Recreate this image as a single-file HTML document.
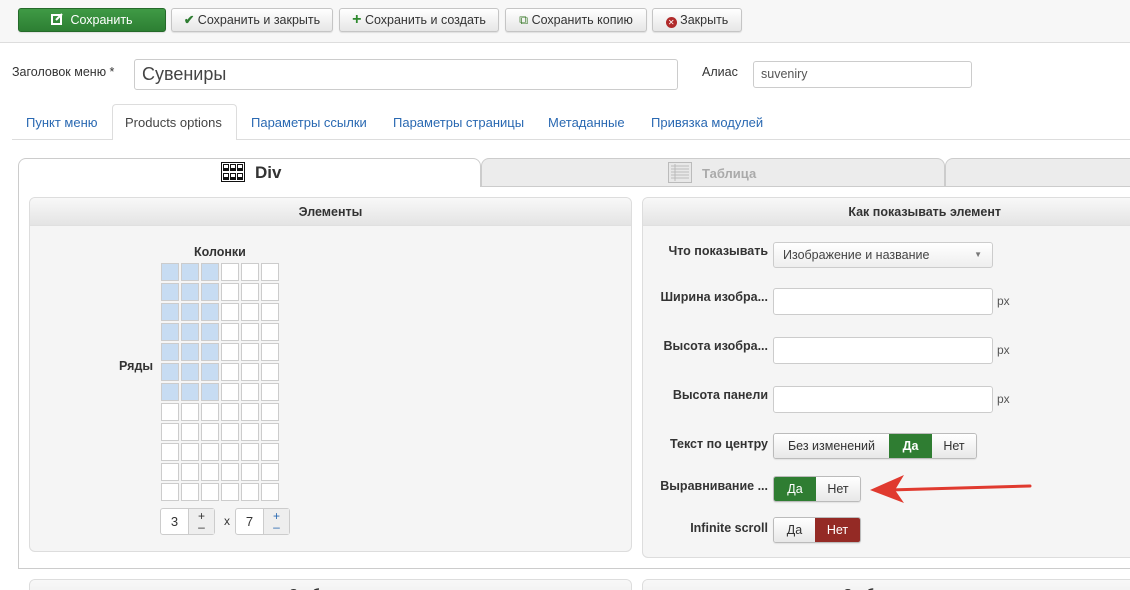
<!DOCTYPE html>
<html style="width:1130px;height:590px;overflow:hidden"><head><meta charset="utf-8"><style>
*{box-sizing:border-box;margin:0;padding:0}
body{width:1130px;height:590px;overflow:hidden;background:#fff;font-family:"Liberation Sans",Arial,sans-serif;font-size:13px;color:#333;position:relative}
.a{position:absolute}
.btn{position:absolute;top:8px;height:24px;border:1px solid #c5c5c5;border-radius:3px;background:linear-gradient(#fff,#e6e6e6);font-size:12.5px;line-height:22px;text-align:center;color:#333;box-shadow:0 1px 1px rgba(0,0,0,.1)}
.inp{position:absolute;background:#fff;border:1px solid #ccc;border-radius:3px}
.tab{position:absolute;top:115px;font-size:13px;color:#2a69b2}
.panel{position:absolute;background:#f5f5f5;border:1px solid #ddd;border-radius:6px;overflow:hidden}
.ph{height:28px;background:linear-gradient(#f8f8f8,#e4e4e4);border-bottom:1px solid #e0e0e0;text-align:center;font-weight:bold;font-size:12.5px;line-height:28px;color:#333}
.cell{position:absolute;width:18px;height:18px;border:1px solid #ccc;background:#fff}
.cell.s{background:#c7dcf2}
.lbl{position:absolute;right:362px;font-weight:bold;font-size:12.5px;color:#333;text-align:right}
.tg{position:absolute;height:26px;border:1px solid #bbb;border-radius:3px;overflow:hidden;display:flex;box-shadow:0 1px 1px rgba(0,0,0,.08)}
.tg span{display:block;height:24px;line-height:24px;text-align:center;background:linear-gradient(#fff,#e8e8e8);font-size:12.5px;color:#333}
.tg .g{background:#2f7d32;color:#fff}
.tg .r{background:#942a25;color:#fff}
.px{position:absolute;left:997px;font-size:12px;color:#555}
</style></head><body>
<div class="a" style="left:0;top:0;width:1130px;height:43px;background:#f7f7f7;border-bottom:1px solid #ddd"></div>
<div class="btn" style="left:18px;width:148px;background:linear-gradient(#3f9a45,#2d7f33);border-color:#256a2a;color:#fff"><svg width="12" height="12" style="vertical-align:-1px;margin-right:7px"><rect x="1" y="2" width="9" height="9" fill="none" stroke="#fff" stroke-width="2"/><path d="M5 7 L11 1" stroke="#fff" stroke-width="2"/></svg>Сохранить</div>
<div class="btn" style="left:171px;width:162px"><span style="color:#2f7d32;font-weight:bold">✔</span> Сохранить и закрыть</div>
<div class="btn" style="left:339px;width:160px"><span style="color:#2f8a2f;font-weight:bold;font-size:16px">+</span> Сохранить и создать</div>
<div class="btn" style="left:505px;width:142px"><span style="color:#3a7a2a">⧉</span> Сохранить копию</div>
<div class="btn" style="left:652px;width:90px"><span style="display:inline-block;width:11px;height:11px;border-radius:50%;background:#b02a2a;color:#fff;font-size:8px;line-height:11px;vertical-align:-1px">✕</span> Закрыть</div>

<div class="a" style="left:12px;top:65px;font-size:12.5px">Заголовок меню *</div>
<div class="inp" style="left:134px;top:59px;width:544px;height:31px;font-size:18px;line-height:29px;padding-left:7px;color:#444">Сувениры</div>
<div class="a" style="left:702px;top:65px;font-size:12.5px">Алиас</div>
<div class="inp" style="left:753px;top:61px;width:219px;height:27px;font-size:12.5px;line-height:25px;padding-left:7px;color:#555">suveniry</div>

<div class="a" style="left:12px;top:139px;width:1118px;height:1px;background:#ddd"></div>
<div class="a" style="left:112px;top:104px;width:125px;height:36px;background:#fff;border:1px solid #ddd;border-bottom:none;border-radius:4px 4px 0 0"></div>
<div class="tab" style="left:26px">Пункт меню</div>
<div class="tab" style="left:125px;color:#444">Products options</div>
<div class="tab" style="left:251px">Параметры ссылки</div>
<div class="tab" style="left:393px">Параметры страницы</div>
<div class="tab" style="left:548px">Метаданные</div>
<div class="tab" style="left:651px">Привязка модулей</div>

<div class="a" style="left:18px;top:186px;width:1112px;height:383px;border-left:1px solid #ccc;border-bottom:1px solid #ccc"></div>
<div class="a" style="left:18px;top:158px;width:463px;height:29px;background:#fff;border:1px solid #ccc;border-bottom:none;border-radius:8px 8px 0 0"></div>
<div class="a" style="left:481px;top:158px;width:464px;height:28px;background:#ececec;border:1px solid #ccc;border-bottom:none;border-radius:8px 8px 0 0"></div>
<div class="a" style="left:945px;top:158px;width:200px;height:28px;background:#ececec;border:1px solid #ccc;border-bottom:none;border-radius:8px 8px 0 0"></div>
<div class="a" style="left:481px;top:186px;width:649px;height:1px;background:#ccc"></div>
<svg class="a" style="left:221px;top:162px" width="24" height="20" viewBox="0 0 24 20"><rect x="0.5" y="0.5" width="23" height="19" fill="#fff" stroke="#111"/><g fill="#111"><rect x="2" y="2" width="6" height="7"/><rect x="9" y="2" width="6" height="7"/><rect x="16" y="2" width="6" height="7"/><rect x="2" y="11" width="6" height="7"/><rect x="9" y="11" width="6" height="7"/><rect x="16" y="11" width="6" height="7"/></g><g fill="#fff"><rect x="3" y="3" width="4" height="3"/><rect x="10" y="3" width="4" height="3"/><rect x="17" y="3" width="4" height="3"/><rect x="3" y="12" width="4" height="3"/><rect x="10" y="12" width="4" height="3"/><rect x="17" y="12" width="4" height="3"/></g></svg>
<div class="a" style="left:255px;top:163px;font-size:17px;font-weight:bold;color:#333">Div</div>
<svg class="a" style="left:668px;top:162px" width="24" height="21"><rect x="0.5" y="0.5" width="23" height="20" fill="#e8e8e8" stroke="#bbb"/><g stroke="#bbb"><line x1="3" y1="4" x2="21" y2="4"/><line x1="3" y1="7" x2="21" y2="7"/><line x1="3" y1="10" x2="21" y2="10"/><line x1="3" y1="13" x2="21" y2="13"/><line x1="3" y1="16" x2="21" y2="16"/><line x1="7" y1="2" x2="7" y2="19"/></g></svg>
<div class="a" style="left:702px;top:166px;font-size:13px;font-weight:bold;color:#aaa">Таблица</div>

<div class="panel" style="left:29px;top:197px;width:603px;height:355px"><div class="ph">Элементы</div></div>
<div class="a" style="left:194px;top:245px;font-weight:bold;font-size:12.5px">Колонки</div>
<div class="a" style="left:119px;top:359px;font-weight:bold;font-size:12.5px">Ряды</div>
<div id="grid"></div>
<div class="a" style="left:160px;top:508px;width:55px;height:27px;border:1px solid #ccc;border-radius:3px;background:#fff;display:flex"><span style="width:27px;text-align:center;line-height:25px">3</span><span style="flex:1;background:#eee;border-left:1px solid #ccc;text-align:center;font-size:12px;line-height:11px;padding-top:2px">+<br>–</span></div>
<div class="a" style="left:224px;top:514px;font-size:12px">x</div>
<div class="a" style="left:235px;top:508px;width:55px;height:27px;border:1px solid #ccc;border-radius:3px;background:#fff;display:flex"><span style="width:27px;text-align:center;line-height:25px">7</span><span style="flex:1;background:#eee;border-left:1px solid #ccc;text-align:center;font-size:12px;line-height:11px;padding-top:2px;color:#2a69b2">+<br>–</span></div>

<div class="panel" style="left:642px;top:197px;width:500px;height:361px"><div class="ph" style="padding-right:140px;padding-left:0;text-align:right">Как показывать элемент</div></div>
<div class="lbl" style="top:244px">Что показывать</div>
<div class="inp" style="left:773px;top:242px;width:220px;height:26px;background:linear-gradient(#fff,#eee);font-size:12.5px;line-height:24px;padding-left:9px;color:#444">Изображение и название<span style="position:absolute;right:10px;top:0;font-size:8px;color:#777">▼</span></div>
<div class="lbl" style="top:290px">Ширина изобра...</div>
<div class="inp" style="left:773px;top:288px;width:220px;height:27px"></div><div class="px" style="top:294px">px</div>
<div class="lbl" style="top:339px">Высота изобра...</div>
<div class="inp" style="left:773px;top:337px;width:220px;height:27px"></div><div class="px" style="top:343px">px</div>
<div class="lbl" style="top:388px">Высота панели</div>
<div class="inp" style="left:773px;top:386px;width:220px;height:27px"></div><div class="px" style="top:392px">px</div>
<div class="lbl" style="top:437px">Текст по центру</div>
<div class="tg" style="left:773px;top:433px;width:204px"><span style="width:115px">Без изменений</span><span class="g" style="width:43px;font-weight:bold">Да</span><span style="flex:1">Нет</span></div>
<div class="lbl" style="top:479px">Выравнивание ...</div>
<div class="tg" style="left:773px;top:476px;width:88px"><span class="g" style="width:42px">Да</span><span style="flex:1">Нет</span></div>
<div class="lbl" style="top:521px">Infinite scroll</div>
<div class="tg" style="left:773px;top:517px;width:88px"><span style="width:41px">Да</span><span class="r" style="flex:1">Нет</span></div>

<svg class="a" style="left:860px;top:470px" width="180" height="40"><line x1="170" y1="16" x2="28" y2="20" stroke="#e03a2f" stroke-width="3" stroke-linecap="round"/><polygon points="10,20 44,5 35,20 44,33" fill="#e03a2f"/></svg>

<div class="panel" style="left:29px;top:579px;width:603px;height:40px"><div class="ph" style="background:linear-gradient(#f8f8f8,#ececec)">Отображение</div></div>
<div class="panel" style="left:642px;top:579px;width:500px;height:40px"><div class="ph" style="background:linear-gradient(#f8f8f8,#ececec);text-align:left;padding-left:200px">Отображение</div></div>

<script>
var g=document.getElementById('grid'),h='';
for(var r=0;r<12;r++)for(var c=0;c<6;c++){h+='<div class="cell'+(r<7&&c<3?' s':'')+'" style="left:'+(161+c*20)+'px;top:'+(263+r*20)+'px"></div>';}
g.innerHTML=h;
</script>
</body></html>
